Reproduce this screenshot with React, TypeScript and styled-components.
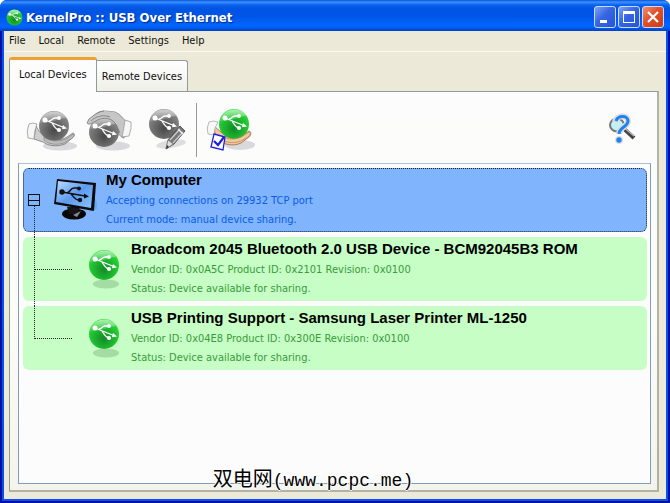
import React from "react";
import styled, { createGlobalStyle, css } from "styled-components";

const GlobalStyle = createGlobalStyle`
  *, *::before, *::after { box-sizing: border-box; }
  body { margin: 0; background: #fff; font-family: "DejaVu Sans Condensed", "DejaVu Sans", sans-serif; font-size: 11px; }
  button { font: inherit; color: inherit; margin: 0; padding: 0; border: 0; background: none; }
`;

const Window = styled.div`
  position: relative;
  display: flex;
  flex-direction: column;
  min-height: 100vh;
  background: #0046e0;
  border-radius: 7px 7px 0 0;
  overflow: hidden;
`;

const TitleBar = styled.header`
  display: flex;
  align-items: center;
  gap: 3px;
  height: 31px;
  padding: 3px 6px 0 6px;
  background: linear-gradient(#0a4fd8 0, #3b93ff 2px, #0a62ee 5px, #0054e3 9px, #0055e8 16px, #0066ff 26px, #005cf0 28px, #0040c0 31px);
`;

const Title = styled.h1`
  flex: 1;
  margin: 0;
  padding-top: 2px;
  color: #fff;
  font: bold 13px/20px "DejaVu Sans Condensed", "DejaVu Sans", sans-serif;
  white-space: nowrap;
  text-shadow: 1px 1px 1px #002a90;
`;

const Controls = styled.div`
  display: flex;
  gap: 2px;
`;

const ControlButton = styled.button<{ $close?: boolean }>`
  display: grid;
  place-items: center;
  width: 22px;
  height: 22px;
  border: 1px solid #c9dcff;
  border-radius: 3px;
  background: ${(p) =>
    p.$close
      ? "linear-gradient(135deg, #f09070, #e0502a 45%, #c83c14)"
      : "linear-gradient(135deg, #7ca4f8, #3565e2 45%, #2455d8)"};
`;

const Client = styled.div`
  flex: 1;
  display: flex;
  flex-direction: column;
  margin: 0 4px 4px;
  background: #ece9d8;
  box-shadow: 0 0 0 2px #0a50f0, 0 0 0 4px #0010a0;
  clip-path: inset(0 -4px -4px -4px);
`;

const MenuBar = styled.nav`
  display: flex;
  gap: 13px;
  height: 21px;
  padding: 0 5px;
  border-bottom: 1px solid #faf9f5;
`;

const MenuItem = styled.button`
  color: #111;
  line-height: 20px;
`;

const Body = styled.main`
  flex: 1;
  display: flex;
  flex-direction: column;
  padding: 5px 7px 7px 5px;
`;

const Tabs = styled.div`
  display: flex;
  align-items: flex-end;
  height: 34px;
`;

const Tab = styled.button<{ $active?: boolean }>`
  color: #111;
  white-space: nowrap;
  border: 1px solid #919b9c;
  ${(p) =>
    p.$active
      ? css`
          position: relative;
          height: 35px;
          margin-bottom: -1px;
          padding: 0 9px 3px;
          border-top: 3px solid #f0a030;
          border-bottom: 0;
          border-radius: 3px 3px 0 0;
          background: #fcfcfc;
        `
      : css`
          height: 31px;
          padding: 0 5px;
          border-left: 0;
          border-bottom: 0;
          border-radius: 0 3px 0 0;
          background: linear-gradient(#fff, #f0f0e8);
        `}
`;

const Panel = styled.section`
  flex: 1;
  display: flex;
  flex-direction: column;
  padding: 0 6px 6px 8px;
  border: 1px solid #919b9c;
  border-right: 2px solid #b0b4a8;
  border-bottom: 2px solid #b0b4a8;
  background: linear-gradient(#fcfcfc, #fbfbf8 60%, #f4f4ec);
`;

const Toolbar = styled.div`
  display: flex;
  align-items: center;
  gap: 8px;
  height: 71px;
  padding: 5px 12px 0 8px;
`;

const ToolButton = styled.button`
  display: block;
  width: 52px;
  height: 48px;
`;

const ToolGroup = styled.div`
  display: flex;
  align-items: center;
  gap: 8px;
`;

const EditButton = styled(ToolButton)`
  width: 42px;
`;

const HelpButton = styled.button`
  display: block;
  width: 32px;
  height: 36px;
  margin-left: auto;
`;

const Separator = styled.div`
  width: 1px;
  height: 54px;
  background: #999;
`;

const List = styled.ul`
  flex: 1;
  display: flex;
  flex-direction: column;
  gap: 5px;
  margin: 0;
  padding: 4px 3px 12px 4px;
  list-style: none;
  border: 1px solid #7f9db9;
  border-top-color: #a9c0dc;
  background: #fcfcfc;
`;

const Row = styled.li<{ $selected?: boolean; $last?: boolean }>`
  position: relative;
  display: flex;
  align-items: center;
  gap: 9px;
  height: 64px;
  border: 1px solid transparent;
  border-radius: 6px;
  ${(p) =>
    p.$selected
      ? css`
          padding-left: 4px;
          background: #80b4fc;
          border: 1px dotted #123;
          &::after {
            content: "";
            position: absolute;
            left: 10px;
            top: 37px;
            bottom: -6px;
            border-left: 1px dotted #222;
          }
        `
      : css`
          padding-left: 62px;
          background: #c6fec6;
          &::before {
            content: "";
            position: absolute;
            left: 10px;
            top: -1px;
            height: ${p.$last ? 33 : 69}px;
            border-left: 1px dotted #222;
          }
          &::after {
            content: "";
            position: absolute;
            left: 10px;
            top: 31px;
            width: 38px;
            border-top: 1px dotted #222;
          }
        `}
`;

const Expander = styled.button`
  width: 12px;
  height: 12px;
  margin-right: 4px;
  border: 1px solid #111;
  background: linear-gradient(#111, #111) center / 10px 1px no-repeat;
`;

const RowText = styled.div`
  height: 62px;
  padding-top: 1px;
  white-space: nowrap;
`;

const Name = styled.h2`
  margin: 0;
  padding-bottom: 1px;
  color: #000;
  font: bold 15px/20px "Liberation Sans", Arial, sans-serif;
`;

const Detail = styled.p<{ $blue?: boolean }>`
  margin: 0;
  line-height: 19px;
  color: ${(p) => (p.$blue ? "#0a5ce8" : "#3a9a3a")};
`;

const Watermark = styled.div`
  position: absolute;
  bottom: 9px;
  left: 0;
  right: 0;
  padding-right: 44px;
  text-align: center;
  color: #000;
  font: 18px/26px "Liberation Mono", monospace;
  text-shadow: 1px 0 #fff, -1px 0 #fff, 0 1px #fff, 0 -1px #fff;
  pointer-events: none;
`;

const WatermarkName = styled.span`
  font: 20px/26px "Noto Sans CJK SC", sans-serif;
`;

const Drawing = styled.svg`
  display: block;
  flex: none;
`;

function Gradients({ id, green }: { id: string; green?: boolean }) {
  return (
    <defs>
      <radialGradient id={id} cx="50%" cy="65%" r="62%">
        <stop offset="0" stopColor={green ? "#128a28" : "#484848"} />
        <stop offset="0.6" stopColor={green ? "#1fbc30" : "#707070"} />
        <stop offset="1" stopColor={green ? "#2edc38" : "#8c8c8c"} />
      </radialGradient>
      <linearGradient id={id + "s"} x1="0" y1="0" x2="0" y2="1">
        <stop offset="0" stopColor="#fff" stopOpacity="0.6" />
        <stop offset="1" stopColor="#fff" stopOpacity="0.1" />
      </linearGradient>
    </defs>
  );
}

function Globe({ id, x, y }: { id: string; x: number; y: number }) {
  return (
    <g transform={`translate(${x} ${y})`}>
      <circle r="15" fill={`url(#${id})`} />
      <path d="M-14 -3C-13 -10 -7 -14.5 0 -14.5C6 -14.5 10 -12 12 -8C5 -8 -2 -2 -14 -3Z" fill={`url(#${id}s)`} />
      <g stroke="#fff" strokeWidth="1.3" fill="none">
        <path d="M-9 -6L11 2M-5 -5C-2 -5 -2 -8 1 -8H5M-2 -3C0 0 1 3 5 4" />
        <path d="M9 -1L13 2.5L8 3.2Z" fill="#fff" stroke="none" />
        <circle cx="-9" cy="-6" r="2.5" fill="#fff" stroke="none" />
        <circle cx="5" cy="-8" r="1.9" fill="#fff" stroke="none" />
        <circle cx="5" cy="4" r="2.1" fill="#fff" stroke="none" />
      </g>
    </g>
  );
}

function ShareIcon() {
  return (
    <Drawing width="52" height="48" viewBox="0 0 52 48" aria-hidden>
      <Gradients id="share" />
      <ellipse cx="34" cy="40" rx="17" ry="4.5" fill="#d9d9dd" />
      <path d="M10 20C12 23 13 27 18 29C25 35 35 35 41 31L47 27C50 28 48 31 45 33L39 38C31 41 22 40 17 36L8 33Z" fill="#cfcfcf" stroke="#777" strokeWidth="0.8" />
      <Globe id="share" x={28} y={20} />
      <path d="M18 31C24 36 35 36 42 32L47 28C49 29 47 32 45 33L38 37C28 40 21 37 18 34Z" fill="#bdbdbd" stroke="#777" strokeWidth="0.6" />
      <path d="M3 18Q0 25 2 32L8 33Q8 25 11 18Q6 16 3 18Z" fill="#f6f6f6" stroke="#999" strokeWidth="0.8" />
    </Drawing>
  );
}

function UnshareIcon() {
  return (
    <Drawing width="52" height="48" viewBox="0 0 52 48" aria-hidden>
      <Gradients id="unshare" />
      <ellipse cx="27" cy="40" rx="17" ry="4.5" fill="#d9d9dd" />
      <path d="M4 15L6 11C11 7 13 5 19 5L29 6C35 8 37 14 41 16L38 32C35 32 33 28 30 24L20 12Z" fill="#c6c6c6" stroke="#777" strokeWidth="0.8" />
      <Globe id="unshare" x={18} y={26} />
      <path d="M1 17L3 13C7 10 11 6 18 5L28 6C33 8 35 12 37 16L34 27C32 23 31 18 27 15C22 11 14 12 10 15C6 16 4 20 1 17Z" fill="#c6c6c6" />
      <path d="M1 17C4 20 6 16 10 15C14 12 22 11 27 15C31 18 32 23 34 27M5 15C11 9 19 9 24 11M1 17L3 13C7 10 11 6 18 5" stroke="#777" strokeWidth="0.8" fill="none" />
      <path d="M39 14L45 16Q46 22 43 30L36 31Q38 22 39 14Z" fill="#f6f6f6" stroke="#999" strokeWidth="0.8" />
    </Drawing>
  );
}

function EditIcon() {
  return (
    <Drawing width="42" height="48" viewBox="0 0 42 48" aria-hidden>
      <Gradients id="edit" />
      <ellipse cx="25" cy="38" rx="15" ry="4" transform="rotate(-8 25 38)" fill="#dedee2" />
      <Globe id="edit" x={18} y={18} />
      <path d="M20 43L22 34L34 20L39 25L28 38Z" fill="#777" stroke="#444" strokeWidth="0.8" />
      <path d="M24 34L34 23M27 37L37 26" stroke="#ccc" strokeWidth="1.2" />
      <path d="M20 43L22 34L27 38Z" fill="#ddd" stroke="#777" strokeWidth="0.5" />
      <path d="M32 23L37 28" stroke="#eee" strokeWidth="1.4" />
      <path d="M20 43L21 39L23 41Z" fill="#333" />
    </Drawing>
  );
}

function AllowIcon() {
  return (
    <Drawing width="52" height="48" viewBox="0 0 52 48" aria-hidden>
      <Gradients id="allow" green />
      <ellipse cx="35" cy="39" rx="15" ry="5" fill="#d9d9dd" />
      <path d="M9 20L16 26C24 34 34 33 38 29L44 25C47 26 46 29 44 31L36 37C28 41 18 38 11 34Z" fill="#f2c69a" stroke="#9a6a45" strokeWidth="0.8" />
      <Globe id="allow" x={29} y={18} />
      <path d="M17 30C25 35 33 33 38 30L44 26C46 27 45 29 43 31L36 35C28 38 20 36 17 34Z" fill="#f5c99d" stroke="#a87850" strokeWidth="0.6" />
      <path d="M4 16Q1 22 3 28L9 29Q9 22 13 16Q8 14 4 16Z" fill="#f7f7f7" stroke="#aaa" strokeWidth="0.8" />
      <path d="M9 28L20 31L18 44L6 41Z" fill="#fff" stroke="#2020dc" strokeWidth="1.3" />
      <path d="M9 35L13 39L19 31" fill="none" stroke="#2020dc" strokeWidth="2.2" />
    </Drawing>
  );
}

function HelpIcon() {
  return (
    <Drawing width="32" height="36" viewBox="0 0 32 36" aria-hidden>
      <path d="M15 15L27 26" stroke="#444" strokeWidth="4" />
      <path d="M15 14L27 24" stroke="#bbb" strokeWidth="1.2" />
      <ellipse cx="10" cy="13" rx="7" ry="6.5" fill="#c2f2f8" stroke="#777" strokeWidth="2" />
      <path d="M8 10C10 2 21 3 21 9C21 15 12 15 12 22" fill="none" stroke="#ddd" strokeWidth="6" />
      <circle cx="12" cy="28" r="4" fill="#ddd" />
      <path d="M9 9C11 3 21 3 21 9C21 15 12 15 12 22" fill="none" stroke="#1c84f0" strokeWidth="3" />
      <circle cx="12" cy="28" r="2.7" fill="#1c84f0" />
    </Drawing>
  );
}

function MonitorIcon() {
  return (
    <Drawing width="44" height="44" viewBox="0 0 44 44" aria-hidden>
      <defs>
        <linearGradient id="screen" x1="0" y1="0" x2="1" y2="1">
          <stop offset="0" stopColor="#bcdcff" />
          <stop offset="0.5" stopColor="#5c9cf0" />
          <stop offset="1" stopColor="#8cc4ff" />
        </linearGradient>
      </defs>
      <path d="M40 14L46 30L36 34Z" fill="#66a8f4" />
      <ellipse cx="21" cy="36" rx="12" ry="5.5" fill="#080808" />
      <path d="M14 29H27L25 36H16Z" fill="#151515" />
      <path d="M20 37L28 33L24 39Z" fill="#888" />
      <path d="M4 1L43 5L41 33L1 26Z" fill="#0b0b0b" />
      <path d="M5 3L40 7L38 30L3 24Z" fill="url(#screen)" />
      <g stroke="#111" strokeWidth="1.5" fill="none">
        <path d="M9 14L32 18M14 15C18 14 17 10 21 10H26M18 16C21 19 22 22 26 22" />
        <path d="M31 15.5L36 18.5L31 20.5Z" fill="#111" stroke="none" />
        <circle cx="9" cy="14" r="2.7" fill="#111" stroke="none" />
        <circle cx="26" cy="10.5" r="2" fill="#111" stroke="none" />
        <circle cx="27" cy="22" r="2.2" fill="#111" stroke="none" />
      </g>
    </Drawing>
  );
}

function DeviceIcon({ id }: { id: string }) {
  return (
    <Drawing width="36" height="42" viewBox="0 0 36 42" aria-hidden>
      <Gradients id={id} green />
      <ellipse cx="20" cy="36" rx="13" ry="4.5" fill="#a4dca4" />
      <Globe id={id} x={18} y={17} />
    </Drawing>
  );
}

const devices = [
  {
    name: "Broadcom 2045 Bluetooth 2.0 USB Device - BCM92045B3 ROM",
    ids: "Vendor ID: 0x0A5C Product ID: 0x2101 Revision: 0x0100",
  },
  {
    name: "USB Printing Support - Samsung Laser Printer ML-1250",
    ids: "Vendor ID: 0x04E8 Product ID: 0x300E Revision: 0x0100",
  },
];

export default function App() {
  return (
    <>
      <GlobalStyle />
      <Window>
        <TitleBar>
          <Drawing width="17" height="17" viewBox="-16 -16 32 32" aria-hidden>
            <Gradients id="app" green />
            <Globe id="app" x={0} y={0} />
          </Drawing>
          <Title>KernelPro :: USB Over Ethernet</Title>
          <Controls>
            <ControlButton aria-label="Minimize">
              <Drawing width="14" height="14" viewBox="0 0 14 14"><path d="M2 10h7v3H2z" fill="#fff" /></Drawing>
            </ControlButton>
            <ControlButton aria-label="Maximize">
              <Drawing width="14" height="14" viewBox="0 0 14 14"><path d="M1 1h12v12H1zM2 4v8h10V4z" fill="#fff" fillRule="evenodd" /></Drawing>
            </ControlButton>
            <ControlButton $close aria-label="Close">
              <Drawing width="14" height="14" viewBox="0 0 14 14"><path d="M2 2L12 12M12 2L2 12" stroke="#fff" strokeWidth="2.2" /></Drawing>
            </ControlButton>
          </Controls>
        </TitleBar>
        <Client>
          <MenuBar>
            {["File", "Local", "Remote", "Settings", "Help"].map((m) => (
              <MenuItem key={m}>{m}</MenuItem>
            ))}
          </MenuBar>
          <Body>
            <Tabs role="tablist">
              <Tab $active role="tab" aria-selected>Local Devices</Tab>
              <Tab role="tab" aria-selected={false}>Remote Devices</Tab>
            </Tabs>
            <Panel role="tabpanel">
              <Toolbar>
                <ToolGroup>
                  <ToolButton aria-label="Share device"><ShareIcon /></ToolButton>
                  <ToolButton aria-label="Unshare device"><UnshareIcon /></ToolButton>
                  <EditButton aria-label="Edit device"><EditIcon /></EditButton>
                </ToolGroup>
                <Separator />
                <ToolButton aria-label="Manual sharing mode"><AllowIcon /></ToolButton>
                <HelpButton aria-label="Help"><HelpIcon /></HelpButton>
              </Toolbar>
              <List>
                <Row $selected>
                  <Expander aria-label="Collapse" />
                  <MonitorIcon />
                  <RowText>
                    <Name>My Computer</Name>
                    <Detail $blue>Accepting connections on 29932 TCP port</Detail>
                    <Detail $blue>Current mode: manual device sharing.</Detail>
                  </RowText>
                </Row>
                {devices.map((d, i) => (
                  <Row key={d.name} $last={i === devices.length - 1}>
                    <DeviceIcon id={`device${i}`} />
                    <RowText>
                      <Name>{d.name}</Name>
                      <Detail>{d.ids}</Detail>
                      <Detail>Status: Device available for sharing.</Detail>
                    </RowText>
                  </Row>
                ))}
              </List>
            </Panel>
          </Body>
        </Client>
        <Watermark><WatermarkName>双电网</WatermarkName>(www.pcpc.me)</Watermark>
      </Window>
    </>
  );
}
